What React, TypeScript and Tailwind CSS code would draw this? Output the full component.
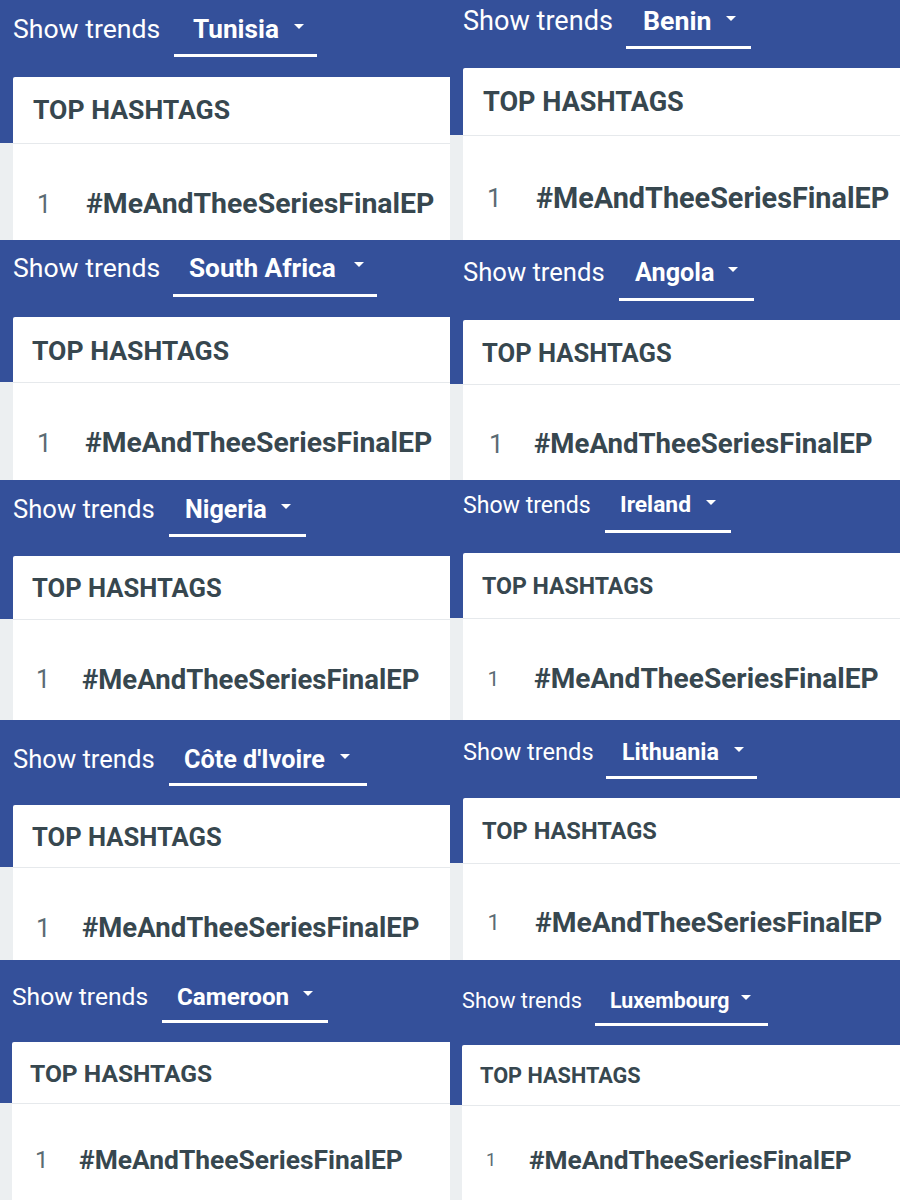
import React from "react";

type Cell = {
  country: string;
  pad: string;
  rowH: string;
  label: string;
  dd: string;
  cty: string;
  caret: string;
  head: string;
  body: string;
  num: string;
  hash: string;
};

const cells: Cell[] = [
  {
    country: "Tunisia",
    pad: "pl-[13px]",
    rowH: "h-[77px]",
    label: "w-[161px] mt-[16px] text-[26.6px]",
    dd: "w-[143px] mt-[16px] pl-[19px] pb-[12px]",
    cty: "text-[26.2px]",
    caret: "ml-[15px]",
    head: "h-[66px] pt-[20px] pl-[20px] text-[26.6px]",
    body: "pt-[46px] pl-[24px]",
    num: "w-[49px] text-[25px]",
    hash: "text-[28.4px]",
  },
  {
    country: "Benin",
    pad: "pl-[13px]",
    rowH: "h-[68px]",
    label: "w-[163px] mt-[8px] text-[27.1px]",
    dd: "w-[125px] mt-[8px] pl-[17px] pb-[11px]",
    cty: "text-[26.7px]",
    caret: "ml-[15px]",
    head: "h-[67px] pt-[21px] pl-[20px] text-[27.1px]",
    body: "pt-[48px] pl-[24px]",
    num: "w-[49px] text-[26px]",
    hash: "text-[28.8px]",
  },
  {
    country: "South Africa",
    pad: "pl-[13px]",
    rowH: "h-[77px]",
    label: "w-[160px] mt-[14.5px] text-[26.6px]",
    dd: "w-[204px] mt-[14.5px] pl-[16px] pb-[13px]",
    cty: "text-[26.2px]",
    caret: "ml-[18px]",
    head: "h-[65px] pt-[20.5px] pl-[19px] text-[26.6px]",
    body: "pt-[46px] pl-[24px]",
    num: "w-[48px] text-[26px]",
    hash: "text-[28.3px]",
  },
  {
    country: "Angola",
    pad: "pl-[13px]",
    rowH: "h-[80px]",
    label: "w-[156px] mt-[20px] text-[25.6px]",
    dd: "w-[135px] mt-[20px] pl-[16px] pb-[12.5px]",
    cty: "text-[25.2px]",
    caret: "ml-[14px]",
    head: "h-[64px] pt-[21px] pl-[19px] text-[25.6px]",
    body: "pt-[45px] pl-[26px]",
    num: "w-[45px] text-[26px]",
    hash: "text-[27.6px]",
  },
  {
    country: "Nigeria",
    pad: "pl-[13px]",
    rowH: "h-[76px]",
    label: "w-[156px] mt-[16.5px] text-[25.6px]",
    dd: "w-[137px] mt-[16.5px] pl-[16px] pb-[12px]",
    cty: "text-[25.2px]",
    caret: "ml-[14px]",
    head: "h-[63px] pt-[20px] pl-[19px] text-[25.6px]",
    body: "pt-[46px] pl-[23px]",
    num: "w-[46px] text-[25px]",
    hash: "text-[27.5px]",
  },
  {
    country: "Ireland",
    pad: "pl-[13px]",
    rowH: "h-[73px]",
    label: "w-[142px] mt-[14px] text-[23.1px]",
    dd: "w-[126px] mt-[14px] pl-[15px] pb-[13px]",
    cty: "text-[22.8px]",
    caret: "ml-[15px]",
    head: "h-[65px] pt-[22px] pl-[19px] text-[23.1px]",
    body: "pt-[46px] pl-[24.5px]",
    num: "w-[46.5px] text-[21px]",
    hash: "text-[28.1px]",
  },
  {
    country: "Côte d'Ivoire",
    pad: "pl-[13px]",
    rowH: "h-[85px]",
    label: "w-[156px] mt-[26.5px] text-[25.6px]",
    dd: "w-[198px] mt-[26.5px] pl-[15px] pb-[11px]",
    cty: "text-[25.2px]",
    caret: "ml-[15px]",
    head: "h-[62px] pt-[20px] pl-[19px] text-[25.6px]",
    body: "pt-[46px] pl-[23px]",
    num: "w-[46px] text-[26px]",
    hash: "text-[27.5px]",
  },
  {
    country: "Lithuania",
    pad: "pl-[13px]",
    rowH: "h-[78px]",
    label: "w-[143px] mt-[20.5px] text-[23.6px]",
    dd: "w-[151px] mt-[20.5px] pl-[16px] pb-[12px]",
    cty: "text-[23.3px]",
    caret: "ml-[15px]",
    head: "h-[65px] pt-[21.5px] pl-[19px] text-[23.6px]",
    body: "pt-[45px] pl-[24.5px]",
    num: "w-[47.5px] text-[22px]",
    hash: "text-[28.3px]",
  },
  {
    country: "Cameroon",
    pad: "pl-[12px]",
    rowH: "h-[82px]",
    label: "w-[150px] mt-[24.5px] text-[24.6px]",
    dd: "w-[166px] mt-[24.5px] pl-[15px] pb-[11px]",
    cty: "text-[24.2px]",
    caret: "ml-[14px]",
    head: "h-[61px] pt-[20px] pl-[18px] text-[24.6px]",
    body: "pt-[42.5px] pl-[23px]",
    num: "w-[44px] text-[24px]",
    hash: "text-[26.4px]",
  },
  {
    country: "Luxembourg",
    pad: "pl-[12px]",
    rowH: "h-[85px]",
    label: "w-[133px] mt-[30px] text-[21.7px]",
    dd: "w-[173px] mt-[30px] pl-[15px] pb-[11.5px]",
    cty: "text-[21.3px]",
    caret: "ml-[12px]",
    head: "h-[60px] pt-[19.5px] pl-[18px] text-[21.7px]",
    body: "pt-[40.5px] pl-[24px]",
    num: "w-[43px] text-[18px]",
    hash: "text-[26.3px]",
  },
];

function Caret({ cls }: { cls: string }) {
  return (
    <svg
      className={`${cls} mb-[6px] shrink-0`}
      width="10"
      height="5"
      viewBox="0 0 10 5"
    >
      <polygon points="0,0 10,0 5,5" fill="#ffffff" />
    </svg>
  );
}

function TrendCell({ c }: { c: Cell }) {
  return (
    <div className="h-[240px] flex flex-col overflow-hidden bg-[#eceff1]">
      <div className={`bg-[#34509a] shrink-0 ${c.pad}`}>
        <div className={`flex items-start ${c.rowH}`}>
          <span
            className={`shrink-0 leading-none text-white font-normal whitespace-nowrap ${c.label}`}
          >
            Show trends
          </span>
          <div
            className={`shrink-0 flex items-center border-b-[3px] border-white ${c.dd}`}
          >
            <span
              className={`leading-none font-bold text-white whitespace-nowrap ${c.cty}`}
            >
              {c.country}
            </span>
            <Caret cls={c.caret} />
          </div>
        </div>
        <div
          className={`bg-white rounded-tl-[2px] leading-none font-bold text-[#37474f] whitespace-nowrap ${c.head}`}
        >
          TOP HASHTAGS
        </div>
      </div>
      <div className={`flex-1 ${c.pad}`}>
        <div
          className={`h-full bg-white border-t border-[#e6e9ec] ${c.body}`}
        >
          <div className="flex items-center">
            <span
              className={`shrink-0 leading-none font-normal text-[#5b6b73] ${c.num}`}
            >
              1
            </span>
            <span
              className={`leading-none font-bold text-[#37474f] whitespace-nowrap ${c.hash}`}
            >
              #MeAndTheeSeriesFinalEP
            </span>
          </div>
        </div>
      </div>
    </div>
  );
}

export default function App() {
  return (
    <div className="w-[900px] h-[1200px] overflow-hidden grid grid-cols-[450px_450px] font-[Roboto,'Liberation_Sans',sans-serif] bg-[#eceff1]">
      {cells.map((c) => (
        <TrendCell key={c.country} c={c} />
      ))}
    </div>
  );
}
